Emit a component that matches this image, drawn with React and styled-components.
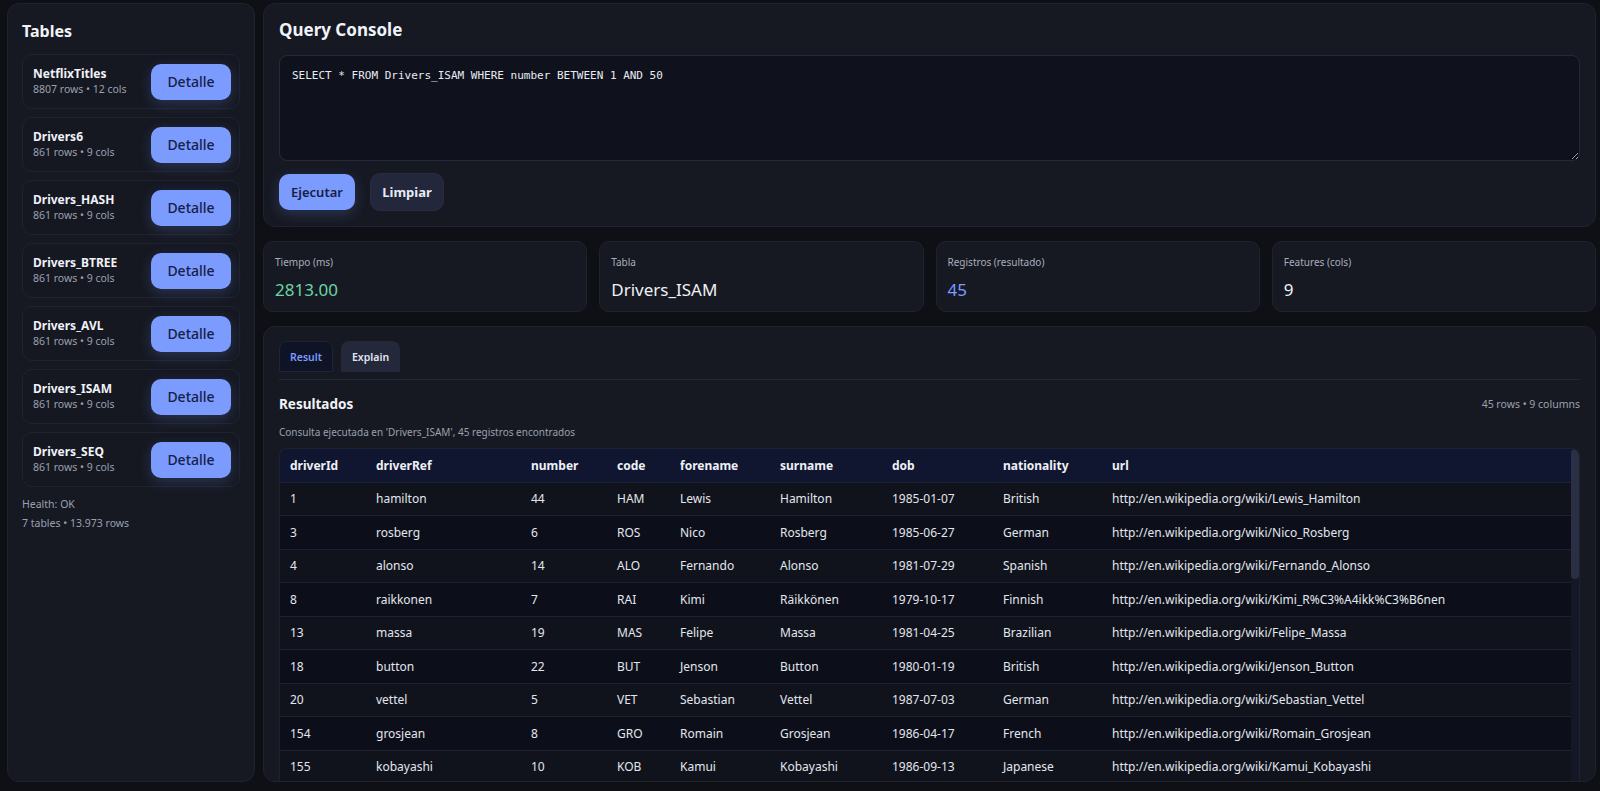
import React from "react";
import styled, { createGlobalStyle } from "styled-components";

const GlobalStyle = createGlobalStyle`
  html, body { margin: 0; padding: 0; background: #0e1015; }
  body { font-family: "Noto Sans", "Open Sans", sans-serif; color: #e6e8ef; }
  * { box-sizing: border-box; }
`;

const Shell = styled.div`
  display: grid;
  grid-template-columns: 248px 1fr;
  gap: 8px;
  height: 791px;
  padding: 3px 4px 9px 7px;
  overflow: hidden;
`;

const Sidebar = styled.aside`
  background: #161922;
  border: 1px solid #1f2330;
  border-radius: 12px;
  padding: 16px 14px;
  display: flex;
  flex-direction: column;
`;

const SideTitle = styled.h2`
  margin: 0 0 12px 0;
  font-size: 16px;
  font-weight: 700;
  color: #f1f3f8;
  height: 22px;
  line-height: 22px;
`;

const TableList = styled.div`
  display: flex;
  flex-direction: column;
  gap: 8px;
`;

const TableCard = styled.div`
  height: 55px;
  border: 1px solid #1f2331;
  border-radius: 10px;
  padding: 0 8px 0 10px;
  display: flex;
  align-items: center;
  justify-content: space-between;
  background: #151821;
`;

const TableName = styled.div`
  font-size: 12px;
  font-weight: 700;
  color: #f0f2f8;
  line-height: 16px;
`;

const TableMeta = styled.div`
  font-size: 10.5px;
  color: #9aa0b0;
  line-height: 15px;
`;

const PrimaryButton = styled.button`
  width: ${(p) => p.$w || 80}px;
  height: 36px;
  border: none;
  border-radius: 10px;
  background: #7b9bff;
  color: #172045;
  font-family: inherit;
  font-size: ${(p) => p.$size || 14}px;
  font-weight: ${(p) => p.$weight || 500};
  box-shadow: 0 4px 14px rgba(123, 155, 255, 0.22);
  cursor: pointer;
`;

const GhostButton = styled.button`
  width: 74px;
  height: 38px;
  border: 1px solid #272c40;
  border-radius: 10px;
  background: #22273b;
  color: #e8ebf5;
  font-family: inherit;
  font-size: 13px;
  font-weight: 700;
  cursor: pointer;
`;

const FootNote = styled.div`
  font-size: 10.5px;
  color: #9aa0b0;
  line-height: 19px;
  margin-top: ${(p) => p.$top || 0}px;
`;

const Main = styled.main`
  display: flex;
  flex-direction: column;
  gap: 14px;
  min-height: 0;
`;

const Panel = styled.section`
  background: #161922;
  border: 1px solid #1f2330;
  border-radius: 12px;
  padding: 15px;
`;

const PanelTitle = styled.h1`
  margin: 0 0 14px 0;
  font-size: 17px;
  font-weight: 700;
  color: #f1f3f8;
  height: 22px;
  line-height: 22px;
`;

const QueryBox = styled.textarea`
  display: block;
  width: 100%;
  height: 106px;
  background: #0f121d;
  border: 1px solid #252a3a;
  border-radius: 8px;
  color: #e8ebf2;
  font-family: "DejaVu Sans Mono", "Liberation Mono", monospace;
  font-size: 11px;
  padding: 13px 12px;
  resize: vertical;
  outline: none;
`;

const ButtonRow = styled.div`
  display: flex;
  align-items: center;
  gap: 15px;
  margin-top: 12px;
`;

const StatsRow = styled.div`
  display: grid;
  grid-template-columns: repeat(4, 1fr);
  gap: 12px;
`;

const StatCard = styled.div`
  height: 71px;
  background: #161922;
  border: 1px solid #1f2330;
  border-radius: 10px;
  padding: 13px 11px;
`;

const StatLabel = styled.div`
  font-size: 10px;
  color: #a8aebd;
  line-height: 14px;
`;

const StatValue = styled.div`
  margin-top: 10px;
  font-size: 17px;
  line-height: 22px;
  color: ${(p) => p.$color || "#eef0f6"};
`;

const ResultsPanel = styled(Panel)`
  flex: 1;
  min-height: 0;
  display: flex;
  flex-direction: column;
  padding: 14px 15px 0 15px;
  overflow: hidden;
`;

const Tabs = styled.div`
  display: flex;
  gap: 8px;
  padding-bottom: 7px;
  border-bottom: 1px solid #232838;
`;

const Tab = styled.button`
  height: 31px;
  padding: 0 10px;
  border-radius: 8px 8px 0 0;
  font-family: inherit;
  font-size: 10.5px;
  font-weight: 600;
  cursor: pointer;
  border: 1px solid ${(p) => (p.$active ? "#1f2436" : "transparent")};
  background: ${(p) => (p.$active ? "#0f1326" : "#23283b")};
  color: ${(p) => (p.$active ? "#7b9bff" : "#e3e6f0")};
`;

const ResultsHead = styled.div`
  display: flex;
  justify-content: space-between;
  align-items: center;
  margin-top: 15px;
  height: 18px;
`;

const ResultsTitle = styled.h3`
  margin: 0;
  font-size: 13.5px;
  font-weight: 700;
  color: #f1f3f8;
`;

const ResultsMeta = styled.div`
  font-size: 10.5px;
  color: #9aa0b0;
`;

const Caption = styled.div`
  margin-top: 12px;
  font-size: 10px;
  color: #9aa0b0;
  line-height: 14px;
`;

const TableWrap = styled.div`
  margin-top: 9px;
  flex: 1;
  min-height: 0;
  display: flex;
  border: 1px solid #1d2233;
  border-bottom: none;
  border-radius: 8px 8px 0 0;
  overflow: hidden;
`;

const TableViewport = styled.div`
  flex: 1;
  min-width: 0;
  overflow: hidden;
`;

const ScrollTrack = styled.div`
  width: 8px;
  flex: none;
  background: #131726;
  display: flex;
  flex-direction: column;
`;

const ScrollThumb = styled.div`
  height: 130px;
  background: #2a2f43;
  border-radius: 4px;
`;

const Grid = styled.table`
  width: 100%;
  border-collapse: collapse;
  table-layout: fixed;
  font-size: 12px;
`;

const Th = styled.th`
  text-align: left;
  font-weight: 700;
  color: #eef0f6;
  background: #111630;
  height: 33px;
  padding: 0 10px;
  border-bottom: 1px solid #1d2233;
`;

const Tr = styled.tr`
  background: ${(p) => (p.$odd ? "#0c0f19" : "#10131c")};
`;

const Td = styled.td`
  height: 33.5px;
  padding: 0 10px;
  color: #e3e6ee;
  border-bottom: 1px solid #1d2232;
  white-space: nowrap;
  overflow: hidden;
`;

const tables = [
  { name: "NetflixTitles", meta: "8807 rows • 12 cols" },
  { name: "Drivers6", meta: "861 rows • 9 cols" },
  { name: "Drivers_HASH", meta: "861 rows • 9 cols" },
  { name: "Drivers_BTREE", meta: "861 rows • 9 cols" },
  { name: "Drivers_AVL", meta: "861 rows • 9 cols" },
  { name: "Drivers_ISAM", meta: "861 rows • 9 cols" },
  { name: "Drivers_SEQ", meta: "861 rows • 9 cols" },
];

const cols = [
  ["driverId", 86],
  ["driverRef", 155],
  ["number", 86],
  ["code", 63],
  ["forename", 100],
  ["surname", 112],
  ["dob", 111],
  ["nationality", 109],
  ["url", null],
];

const W = "http://en.wikipedia.org/wiki/";
const rows = [
  [1, "hamilton", 44, "HAM", "Lewis", "Hamilton", "1985-01-07", "British", "Lewis_Hamilton"],
  [3, "rosberg", 6, "ROS", "Nico", "Rosberg", "1985-06-27", "German", "Nico_Rosberg"],
  [4, "alonso", 14, "ALO", "Fernando", "Alonso", "1981-07-29", "Spanish", "Fernando_Alonso"],
  [8, "raikkonen", 7, "RAI", "Kimi", "Räikkönen", "1979-10-17", "Finnish", "Kimi_R%C3%A4ikk%C3%B6nen"],
  [13, "massa", 19, "MAS", "Felipe", "Massa", "1981-04-25", "Brazilian", "Felipe_Massa"],
  [18, "button", 22, "BUT", "Jenson", "Button", "1980-01-19", "British", "Jenson_Button"],
  [20, "vettel", 5, "VET", "Sebastian", "Vettel", "1987-07-03", "German", "Sebastian_Vettel"],
  [154, "grosjean", 8, "GRO", "Romain", "Grosjean", "1986-04-17", "French", "Romain_Grosjean"],
  [155, "kobayashi", 10, "KOB", "Kamui", "Kobayashi", "1986-09-13", "Japanese", "Kamui_Kobayashi"],
];

const stats = [
  { label: "Tiempo (ms)", value: "2813.00", color: "#6ad6a4" },
  { label: "Tabla", value: "Drivers_ISAM" },
  { label: "Registros (resultado)", value: "45", color: "#7b9bff" },
  { label: "Features (cols)", value: "9" },
];

export default function App() {
  return (
    <>
      <GlobalStyle />
      <Shell>
        <Sidebar>
          <SideTitle>Tables</SideTitle>
          <TableList>
            {tables.map((t) => (
              <TableCard key={t.name}>
                <div>
                  <TableName>{t.name}</TableName>
                  <TableMeta>{t.meta}</TableMeta>
                </div>
                <PrimaryButton>Detalle</PrimaryButton>
              </TableCard>
            ))}
          </TableList>
          <FootNote $top={8}>Health: OK</FootNote>
          <FootNote>7 tables • 13.973 rows</FootNote>
        </Sidebar>

        <Main>
          <Panel>
            <PanelTitle>Query Console</PanelTitle>
            <QueryBox
              spellCheck={false}
              defaultValue="SELECT * FROM Drivers_ISAM WHERE number BETWEEN 1 AND 50"
            />
            <ButtonRow>
              <PrimaryButton $w={76} $size={13} $weight={600}>
                Ejecutar
              </PrimaryButton>
              <GhostButton>Limpiar</GhostButton>
            </ButtonRow>
          </Panel>

          <StatsRow>
            {stats.map((s) => (
              <StatCard key={s.label}>
                <StatLabel>{s.label}</StatLabel>
                <StatValue $color={s.color}>{s.value}</StatValue>
              </StatCard>
            ))}
          </StatsRow>

          <ResultsPanel>
            <Tabs>
              <Tab $active>Result</Tab>
              <Tab>Explain</Tab>
            </Tabs>
            <ResultsHead>
              <ResultsTitle>Resultados</ResultsTitle>
              <ResultsMeta>45 rows • 9 columns</ResultsMeta>
            </ResultsHead>
            <Caption>
              Consulta ejecutada en 'Drivers_ISAM', 45 registros encontrados
            </Caption>
            <TableWrap>
              <TableViewport>
                <Grid>
                  <colgroup>
                    {cols.map(([c, w]) => (
                      <col key={c} style={w ? { width: w } : undefined} />
                    ))}
                  </colgroup>
                  <thead>
                    <tr>
                      {cols.map(([c]) => (
                        <Th key={c}>{c}</Th>
                      ))}
                    </tr>
                  </thead>
                  <tbody>
                    {rows.map((r, i) => (
                      <Tr key={r[0]} $odd={i % 2 === 1}>
                        {r.slice(0, 8).map((v, j) => (
                          <Td key={j}>{v}</Td>
                        ))}
                        <Td>{W + r[8]}</Td>
                      </Tr>
                    ))}
                  </tbody>
                </Grid>
              </TableViewport>
              <ScrollTrack>
                <ScrollThumb />
              </ScrollTrack>
            </TableWrap>
          </ResultsPanel>
        </Main>
      </Shell>
    </>
  );
}
